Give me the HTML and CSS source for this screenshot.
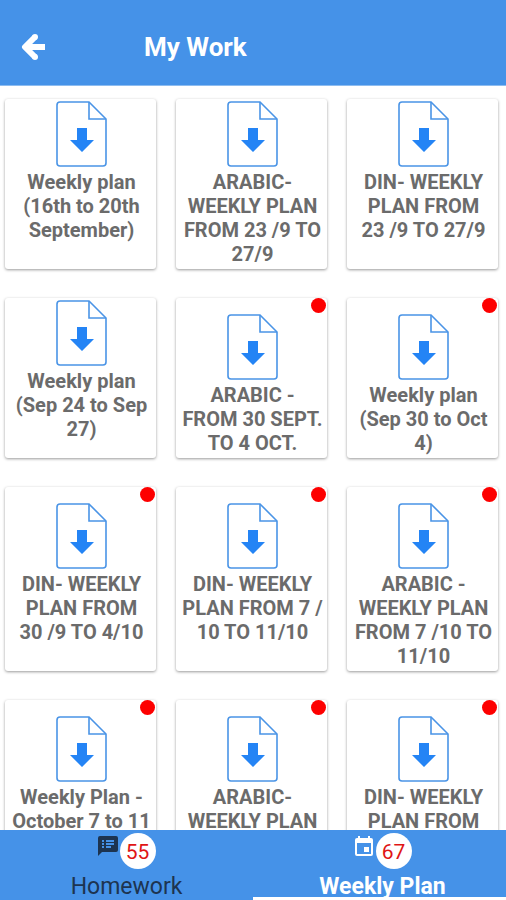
FILE: index.html
```html
<!DOCTYPE html>
<html lang="en">
<head>
    <meta charset="UTF-8">
    <meta name="viewport" content="width=device-width, initial-scale=1.0">
    <title>My Work</title>
    <link rel="stylesheet" href="styles.css">
</head>
<body>
    <!-- Shared document icon -->
    <svg class="sprite" aria-hidden="true">
        <symbol id="file" viewBox="0 0 52 68">
            <path d="M4 2h29l17 17v44a3 3 0 0 1-3 3H4a3 3 0 0 1-3-3V5a3 3 0 0 1 3-3z" fill="#fff" stroke="#4a94e6" stroke-width="1.600"/>
            <path d="M33 2v17h17" fill="none" stroke="#4a94e6" stroke-width="1.600"/>
            <path d="M21 28h10v12h7L26 52 14 40h7z" fill="#2484f5"/>
        </symbol>
    </svg>

    <!-- Top bar -->
    <header class="topbar">
        <button class="back" type="button" aria-label="Back">
            <svg width="26" height="28" viewBox="0 0 26 28">
                <path d="M14 4L4 14L14 24M5 14H24" fill="none" stroke="#fff" stroke-width="6" stroke-linejoin="round"/>
                <circle cx="14" cy="4" r="3" fill="#fff"/>
                <circle cx="14" cy="24" r="3" fill="#fff"/>
            </svg>
        </button>
        <h1>My Work</h1>
    </header>

    <!-- Work files -->
    <main class="files">
        <a class="card" href="#"><svg class="file"><use href="#file"/></svg>Weekly plan (16th to 20th September)</a>
        <a class="card" href="#"><svg class="file"><use href="#file"/></svg>ARABIC- WEEKLY PLAN FROM 23 /9 TO 27/9</a>
        <a class="card" href="#"><svg class="file"><use href="#file"/></svg>DIN- WEEKLY PLAN FROM 23&nbsp;/9 TO 27/9</a>

        <a class="card" href="#"><svg class="file"><use href="#file"/></svg>Weekly plan (Sep 24 to Sep 27)</a>
        <a class="card new" href="#"><svg class="file"><use href="#file"/></svg>ARABIC - <br>FROM 30 SEPT. TO 4 OCT.</a>
        <a class="card new" href="#"><svg class="file"><use href="#file"/></svg>Weekly plan (Sep 30 to Oct 4)</a>

        <a class="card new" href="#"><svg class="file"><use href="#file"/></svg>DIN- WEEKLY PLAN FROM 30&nbsp;/9 TO 4/10</a>
        <a class="card new" href="#"><svg class="file"><use href="#file"/></svg>DIN- WEEKLY PLAN FROM 7 /<br>10 TO 11/10</a>
        <a class="card new" href="#"><svg class="file"><use href="#file"/></svg>ARABIC - WEEKLY PLAN FROM 7 /10 TO 11/10</a>

        <a class="card new" href="#"><svg class="file"><use href="#file"/></svg>Weekly Plan - October 7 to 11</a>
        <a class="card new" href="#"><svg class="file"><use href="#file"/></svg>ARABIC- WEEKLY PLAN</a>
        <a class="card new" href="#"><svg class="file"><use href="#file"/></svg>DIN- WEEKLY PLAN FROM</a>
    </main>

    <!-- Bottom tabs -->
    <nav class="tabs">
        <a class="tab" href="#">
            <span class="tab-top">
                <svg width="20" height="20" viewBox="0 0 20 20">
                    <path d="M2 0h16a2 2 0 0 1 2 2v12a2 2 0 0 1-2 2H4l-4 4V2a2 2 0 0 1 2-2z" fill="#1d3450"/>
                    <path d="M4 4h2v2H4zM8 4h8v2H8zM4 7h2v2H4zM8 7h8v2H8zM4 10h2v2H4zM8 10h5v2H8z" fill="#4592e8"/>
                </svg>
                <span class="count">55</span>
            </span>
            Homework
        </a>
        <a class="tab active" href="#">
            <span class="tab-top">
                <svg width="20" height="20" viewBox="0 0 20 20">
                    <path d="M4 0h2v2h8V0h2v2h1a2 2 0 0 1 2 2v14a2 2 0 0 1-2 2H3a2 2 0 0 1-2-2V4a2 2 0 0 1 2-2h1zM3 7v11h14V7z" fill="#fff" fill-rule="evenodd"/>
                    <path d="M10 11h5v5h-5z" fill="#fff"/>
                </svg>
                <span class="count">67</span>
            </span>
            Weekly Plan
        </a>
    </nav>
</body>
</html>
```
FILE: styles.css
```css
* {
    box-sizing: border-box;
}

body {
    margin: 0;
    height: 100vh;
    display: flex;
    flex-direction: column;
    font-family: Roboto, Arial, sans-serif;
    background-color: #fff;
}

.sprite {
    position: absolute;
    width: 0;
    height: 0;
}

/* top bar */
.topbar {
    flex: none;
    display: flex;
    align-items: center;
    gap: 97px;
    height: 86px;
    padding: 9px 21px 0;
    background-color: #4592e8;
    border-bottom: 1px solid #8dbcf0;
    color: #fff;
}

.back {
    display: flex;
    padding: 0;
    border: none;
    background: none;
    cursor: pointer;
}

h1 {
    margin: 0;
    font-size: 26px;
    font-weight: 700;
}

/* grid of files */
.files {
    flex: 1;
    min-height: 0;
    overflow-y: auto;
    scrollbar-width: none;
    display: grid;
    grid-template-columns: repeat(3, 1fr);
    align-content: start;
    gap: 29px 20px;
    padding: 13px 8px 0 5px;
}

.card {
    position: relative;
    padding: 1px 1px 3px 3px;
    border-radius: 3px;
    background-color: #fff;
    box-shadow: 0 1px 3px rgba(0, 0, 0, 0.4);
    color: #6b6b6b;
    font-size: 20px;
    font-weight: 700;
    line-height: 24px;
    text-align: center;
    text-decoration: none;
}

.file {
    display: block;
    width: 52px;
    height: 68px;
    margin: 0 auto 2px;
}

.card.new {
    padding-top: 15px;
}

/* red dot on unread files */
.card.new::after {
    content: "";
    position: absolute;
    top: 0;
    right: 1px;
    width: 15px;
    height: 15px;
    border-radius: 50%;
    background-color: #fd0000;
}

/* bottom tabs */
.tabs {
    flex: none;
    display: flex;
    height: 70px;
    background-color: #4592e8;
}

.tab {
    width: 50%;
    display: flex;
    flex-direction: column;
    align-items: center;
    padding-top: 3px;
    border-bottom: 3px solid transparent;
    color: #1d3450;
    font-size: 23px;
    line-height: 36px;
    text-decoration: none;
}

.tab.active {
    padding-left: 6px;
    border-color: #fff;
    color: #fff;
    font-weight: 700;
}

.tab-top {
    display: flex;
    gap: 2px;
}

.tab-top svg {
    margin-top: 3px;
}

.count {
    width: 36px;
    height: 36px;
    border-radius: 50%;
    background-color: #fff;
    color: #e01515;
    font-size: 21px;
    font-weight: 400;
    line-height: 38px;
    text-align: center;
}
```
